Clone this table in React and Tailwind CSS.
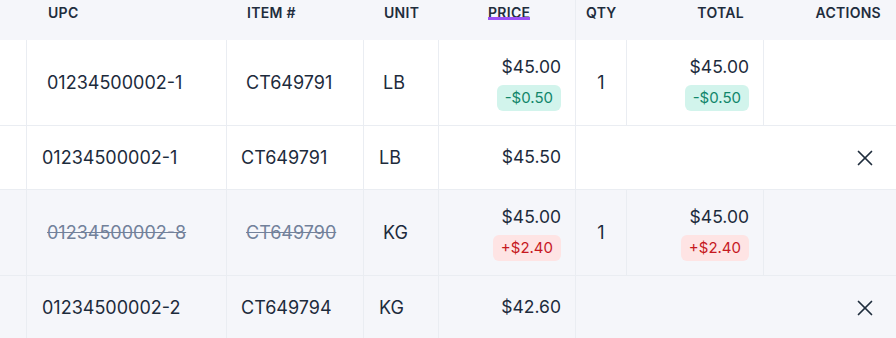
import React from "react";

const F = { fontFamily: "Inter, 'Noto Sans', sans-serif" };

function XIcon() {
  return (
    <svg width="16" height="16" viewBox="0 0 16 16" fill="none" stroke="#1f2d3d" strokeWidth="1.7" strokeLinecap="round">
      <path d="M1.5 1.5 14.5 14.5" />
      <path d="M14.5 1.5 1.5 14.5" />
    </svg>
  );
}

function Badge({ kind, children }) {
  const cls =
    kind === "green"
      ? "bg-[#d2f4ec] text-[#11866a]"
      : "bg-[#fee4e4] text-[#c6191f]";
  return (
    <span className={`inline-flex items-center h-[26px] px-[8px] rounded-[6px] text-[15px] leading-[26px] ${cls}`}>
      {children}
    </span>
  );
}

function MainRow({ upc, item, unit, price, badge, badgeKind, qty, total, struck, bg, h }) {
  const strike = struck ? "line-through text-[#72819a]" : "";
  return (
    <div className={`flex ${h} border-b border-[#eaedf2] ${bg}`}>
      <div className="w-[27px] shrink-0 border-r border-[#eaedf2]" />
      <div className={`w-[200px] shrink-0 border-r border-[#eaedf2] pl-[20px] flex items-center text-[18px] ${strike}`}>{upc}</div>
      <div className={`w-[137px] shrink-0 border-r border-[#eaedf2] pl-[19px] flex items-center text-[18px] ${strike}`}>{item}</div>
      <div className="w-[75px] shrink-0 border-r border-[#eaedf2] pl-[19px] flex items-center text-[18px]">{unit}</div>
      <div className="w-[137px] shrink-0 border-r border-[#eaedf2] pr-[14px] flex flex-col items-end justify-center">
        <div className="leading-[24px]">{price}</div>
        <div className="mt-[5px]"><Badge kind={badgeKind}>{badge}</Badge></div>
      </div>
      <div className="w-[51px] shrink-0 border-r border-[#eaedf2] flex items-center justify-center text-[18px]">{qty}</div>
      <div className="w-[137px] shrink-0 border-r border-[#eaedf2] pr-[14px] flex flex-col items-end justify-center">
        <div className="leading-[24px]">{total}</div>
        <div className="mt-[5px]"><Badge kind={badgeKind}>{badge}</Badge></div>
      </div>
      <div className="flex-1" />
    </div>
  );
}

function SubRow({ upc, item, unit, price, bg, h, last }) {
  return (
    <div className={`flex ${h} ${last ? "" : "border-b border-[#eaedf2]"} ${bg}`}>
      <div className="w-[27px] shrink-0 border-r border-[#eaedf2]" />
      <div className="w-[200px] shrink-0 border-r border-[#eaedf2] pl-[15px] flex items-center text-[18px]">{upc}</div>
      <div className="w-[137px] shrink-0 border-r border-[#eaedf2] pl-[14px] flex items-center text-[18px]">{item}</div>
      <div className="w-[75px] shrink-0 border-r border-[#eaedf2] pl-[15px] flex items-center text-[18px]">{unit}</div>
      <div className="w-[137px] shrink-0 border-r border-[#eaedf2] pr-[14px] flex items-center justify-end">{price}</div>
      <div className="flex-1 flex items-center justify-end pr-[23px]">
        <XIcon />
      </div>
    </div>
  );
}

export default function App() {
  return (
    <div style={F} className="w-[896px] h-[338px] overflow-hidden bg-white text-[17.5px] text-[#1d2b3c]">
      <div className="flex h-[40px] bg-[#f5f6fa] text-[14px] font-semibold tracking-[0.02em] text-[#1f2d3d] leading-[20px]">
        <div className="w-[27px] shrink-0" />
        <div className="w-[200px] shrink-0 pl-[21px] pt-[3px]">UPC</div>
        <div className="w-[137px] shrink-0 pl-[20px] pt-[3px]">ITEM #</div>
        <div className="w-[75px] shrink-0 pl-[20px] pt-[3px]">UNIT</div>
        <div className="w-[137px] shrink-0 border-r border-[#eaedf2] pl-[49px] pt-[3px]">
          <span className="relative inline-block">
            PRICE
            <span className="absolute left-0 right-0 top-[14px] h-[3px] bg-[#9b4ff5]" />
          </span>
        </div>
        <div className="w-[51px] shrink-0 pl-[10px] pt-[3px]">QTY</div>
        <div className="w-[137px] shrink-0 pr-[20px] pt-[3px] text-right">TOTAL</div>
        <div className="flex-1 pr-[15px] pt-[3px] text-right">ACTIONS</div>
      </div>
      <MainRow
        h="h-[86px]"
        bg="bg-white"
        upc="01234500002-1"
        item="CT649791"
        unit="LB"
        price="$45.00"
        badge="-$0.50"
        badgeKind="green"
        qty="1"
        total="$45.00"
      />
      <SubRow h="h-[64px]" bg="bg-white" upc="01234500002-1" item="CT649791" unit="LB" price="$45.50" />
      <MainRow
        h="h-[86px]"
        bg="bg-[#f5f6fa]"
        upc="01234500002-8"
        item="CT649790"
        unit="KG"
        price="$45.00"
        badge="+$2.40"
        badgeKind="red"
        qty="1"
        total="$45.00"
        struck
      />
      <SubRow h="h-[63px]" bg="bg-[#f5f6fa]" upc="01234500002-2" item="CT649794" unit="KG" price="$42.60" last />
    </div>
  );
}
